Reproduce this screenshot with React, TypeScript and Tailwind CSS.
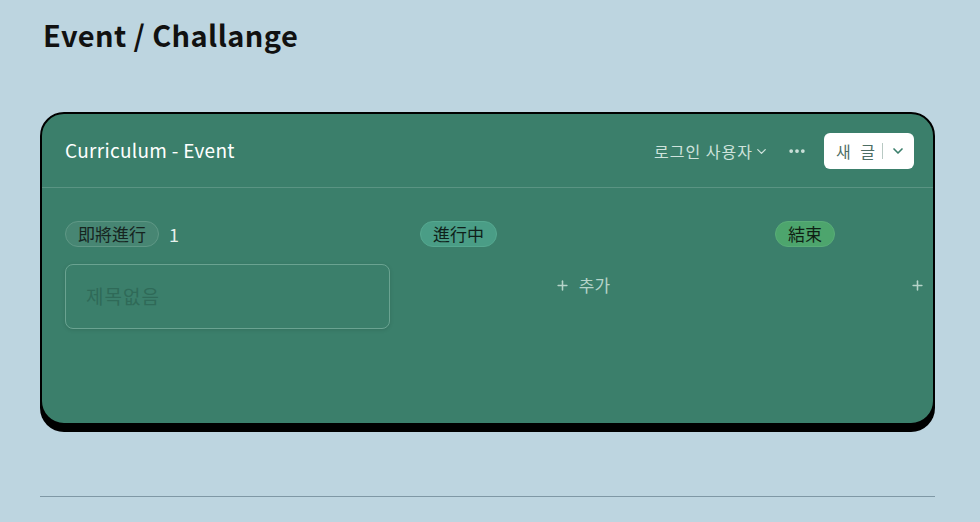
import { ChevronDown, MoreHorizontal, Plus } from 'lucide-react'

const font = { fontFamily: '"Noto Sans CJK KR", "Noto Sans", sans-serif' }

const columns = [
  { label: '即將進行', count: '1', tag: 'bg-[#478673] border-[#5f9886] text-[#16241f]', cards: ['제목없음'] },
  { label: '進行中', count: '', tag: 'bg-[#4a9d86] border-[#55a890] text-[#0f1f1a]', cards: [] },
  { label: '結束', count: '', tag: 'bg-[#4da56d] border-[#59ad78] text-[#0f1f14]', cards: [] },
]

export default function App() {
  return (
    <div className="min-h-[522px] w-[980px] bg-[#bdd5e0] px-10 pt-[13px]" style={font}>
      <h1 className="pl-[3px] text-[29px] leading-[42px] font-bold tracking-[0.4px] text-[#111]">Event / Challange</h1>

      <div className="mt-[57px] h-[313px] w-[895px] overflow-hidden rounded-[24px] border-2 border-black bg-[#3b7f6b] shadow-[0_7px_0_0_#000]">
        {/* header */}
        <div className="flex h-[74px] items-center justify-between border-b border-[#5a9483] pl-[23px] pr-[19px]">
          <span className="text-[19px] tracking-[0.3px] text-white">Curriculum - Event</span>
          <div className="flex items-center">
            <span className="flex items-center text-[16px] tracking-[1px] text-[#cfe3dc]">
              로그인 사용자
              <ChevronDown size={15} strokeWidth={2} className="ml-[1px] mt-[1px]" />
            </span>
            <MoreHorizontal size={20} strokeWidth={2.5} className="ml-[18px] text-[#cfe3dc]" />
            <div className="ml-[17px] flex h-[36px] w-[90px] items-center rounded-[6px] bg-white pl-[12px]">
              <span className="text-[16px] tracking-[3px] text-[#4d6d63]">새 글</span>
              <span className="ml-[4px] h-[16px] w-px bg-[#b8c9c3]" />
              <ChevronDown size={16} strokeWidth={2.5} className="ml-[7px] text-[#3b7f6b]" />
            </div>
          </div>
        </div>

        {/* board */}
        <div className="flex gap-[30px] pl-[23px] pt-[33px]">
          {columns.map((col) => (
            <div key={col.label} className="w-[325px] shrink-0">
              <div className="flex h-[26px] items-center gap-[10px]">
                <span className={`rounded-full border px-[12px] text-[17px] leading-[24px] ${col.tag}`}>{col.label}</span>
                {col.count && <span className="text-[18px] text-[#e6f0ec]">{col.count}</span>}
              </div>
              <div className="mt-[17px]">
                {col.cards.length > 0 ? (
                  col.cards.map((c) => (
                    <div
                      key={c}
                      className="flex h-[65px] items-center rounded-[8px] border border-[#6aa391] pl-[20px] shadow-[0_1px_4px_rgba(0,0,0,0.12)]"
                    >
                      <span className="text-[19px] tracking-[1px] text-[#2f6a58]">{c}</span>
                    </div>
                  ))
                ) : (
                  <div className="flex h-[42px] items-center justify-center text-[17px] text-[#b6d4c9]">
                    <Plus size={15} strokeWidth={2.5} className="mr-[9px]" />
                    추가
                  </div>
                )}
              </div>
            </div>
          ))}
        </div>
      </div>

      <div className="mt-[71px] h-px w-[895px] bg-[#7f98a5]" />
    </div>
  )
}
